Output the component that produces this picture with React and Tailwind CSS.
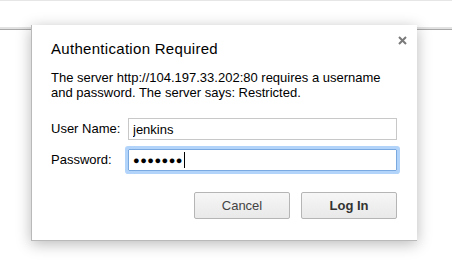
import { useState } from 'react';

const App = () => {
    const [form, setForm] = useState({ username: 'jenkins', password: 'jenkins' });

    return (
        <div className="relative w-[452px] h-[276px] bg-white overflow-hidden" style={{ fontFamily: '"Liberation Sans", Arial, sans-serif' }}>
            {/* browser chrome behind the dialog */}
            <div className="h-[1px] bg-[#e6e6e6]" />
            <div className="h-[26px] bg-white" />
            <div className="h-[2px] bg-[#e2e2e2]" />
            <div className="h-[1px] bg-[#a9a9a9]" />

            <div className="absolute left-[31px] top-[25px] w-[386px] h-[216px] bg-white border-l border-b border-[#b9b9b9] shadow-[0_3px_14px_rgba(0,0,0,0.28)] pl-[19px] pr-[20px]">
                <button className="absolute right-[9px] top-[9px] w-[12px] h-[12px] flex items-center justify-center text-[#7a7a7a]">
                    <svg width="9" height="9" viewBox="0 0 9 9">
                        <path d="M1 1 L8 8 M8 1 L1 8" stroke="currentColor" strokeWidth="2" />
                    </svg>
                </button>

                <h2 className="pt-[15px] text-[15px] leading-[18px] tracking-[0.3px] text-black">Authentication Required</h2>
                <p className="mt-[12px] text-[13px] leading-[15px] text-black">
                    The server http://104.197.33.202:80 requires a username<br />
                    and password. The server says: Restricted.
                </p>

                <div className="mt-[18px] flex flex-col gap-[9px]">
                    <div className="flex items-center">
                        <label className="w-[77px] text-[13px] text-black">User Name:</label>
                        <input
                            className="w-[269px] h-[22px] border border-[#c8c8c8] px-[4px] text-[13px] text-black outline-none"
                            value={form.username}
                            onChange={e => setForm({ ...form, username: e.target.value })}
                        />
                    </div>
                    <div className="flex items-center">
                        <label className="w-[77px] text-[13px] text-black">Password:</label>
                        <div className="w-[269px] h-[22px] border border-[#7aa9e0] ring-[3px] ring-[#b3d4fa] rounded-[1px] px-[4px] flex items-center">
                            <span className="text-[11px] tracking-[0.5px] text-black leading-none">●●●●●●●</span>
                            <span className="w-[1px] h-[16px] bg-black ml-[1px]" />
                        </div>
                    </div>
                </div>

                <div className="mt-[21px] flex justify-end gap-[11px]">
                    <button className="w-[96px] h-[27px] rounded-[2px] border border-[#b5b5b5] bg-gradient-to-b from-[#f6f6f6] to-[#e9e9e9] text-[13px] text-[#444]">Cancel</button>
                    <button className="w-[96px] h-[27px] rounded-[2px] border border-[#b5b5b5] bg-gradient-to-b from-[#f6f6f6] to-[#e9e9e9] text-[13px] font-bold text-[#333]">Log In</button>
                </div>
            </div>
        </div>
    );
};

export default App;
